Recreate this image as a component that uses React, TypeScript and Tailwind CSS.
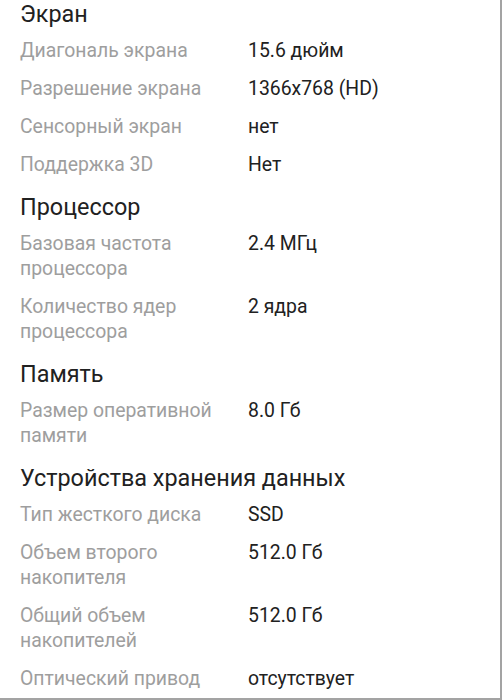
import React from 'react';

type Row = { label: string; value: string };
type Section = { title: string; rows: Row[] };

// Spec groups as shown on the product page
const sections: Section[] = [
  {
    title: 'Экран',
    rows: [
      { label: 'Диагональ экрана', value: '15.6 дюйм' },
      { label: 'Разрешение экрана', value: '1366x768 (HD)' },
      { label: 'Сенсорный экран', value: 'нет' },
      { label: 'Поддержка 3D', value: 'Нет' },
    ],
  },
  {
    title: 'Процессор',
    rows: [
      { label: 'Базовая частота процессора', value: '2.4 МГц' },
      { label: 'Количество ядер процессора', value: '2 ядра' },
    ],
  },
  {
    title: 'Память',
    rows: [{ label: 'Размер оперативной памяти', value: '8.0 Гб' }],
  },
  {
    title: 'Устройства хранения данных',
    rows: [
      { label: 'Тип жесткого диска', value: 'SSD' },
      { label: 'Объем второго накопителя', value: '512.0 Гб' },
      { label: 'Общий объем накопителей', value: '512.0 Гб' },
      { label: 'Оптический привод', value: 'отсутствует' },
    ],
  },
];

const SpecRow: React.FC<Row> = ({ label, value }) => (
  <div className="flex py-[6.5px] text-[19.4px] leading-[25px]">
    <div className="w-[228px] shrink-0 pr-2 text-[#9e9e9e]">{label}</div>
    <div className="flex-1 text-[#212121]">{value}</div>
  </div>
);

export default function App() {
  return (
    <div
      className="h-[700px] w-[502px] overflow-hidden border-r-2 border-b-2 border-[#a3a3a3] bg-white"
      style={{ fontFamily: 'Roboto, "Noto Sans", sans-serif' }}
    >
      <div className="px-5">
        {sections.map((section, i) => (
          <div key={section.title} className={i === 0 ? '' : 'mt-[10px]'}>
            <h2 className="pb-[3px] text-[23.4px] leading-[28px] text-[#212121]">
              {section.title}
            </h2>
            {section.rows.map((row) => (
              <SpecRow key={row.label} {...row} />
            ))}
          </div>
        ))}
      </div>
    </div>
  );
}
